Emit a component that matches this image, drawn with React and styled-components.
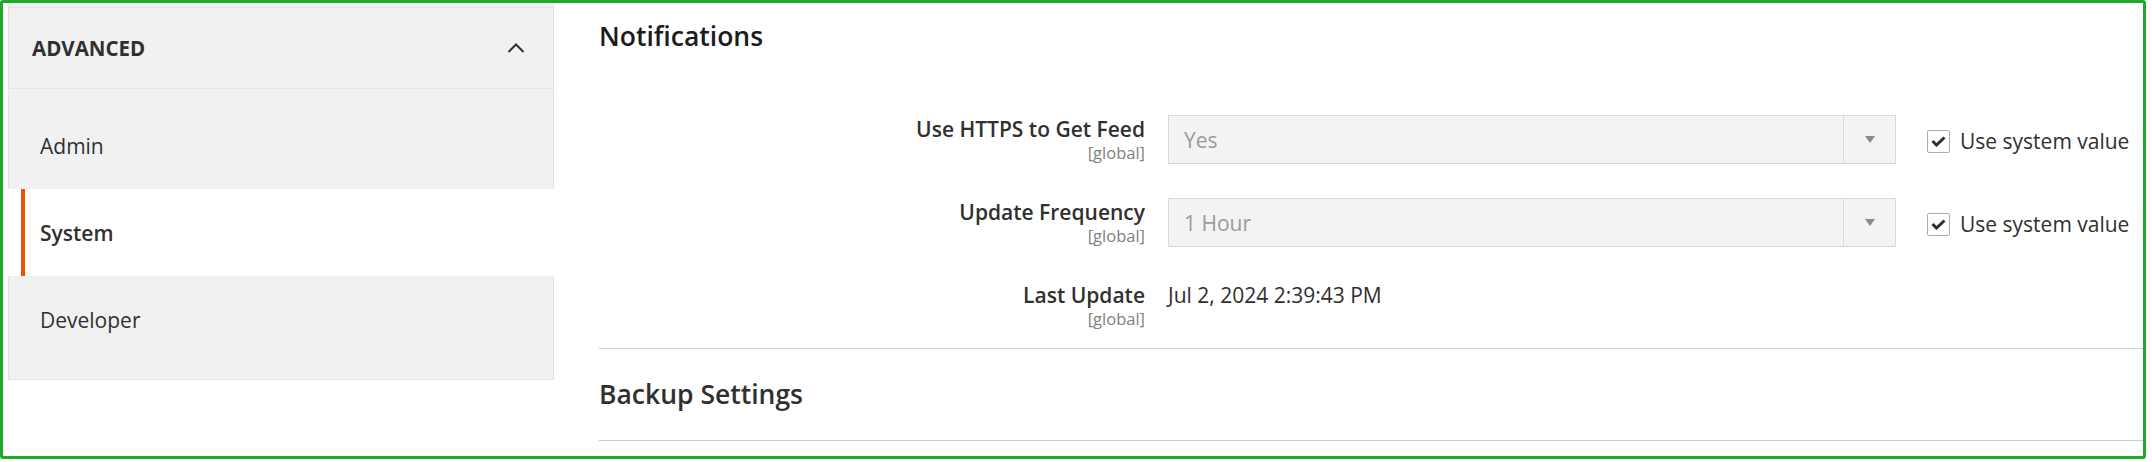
import React from 'react'
import styled, { createGlobalStyle } from 'styled-components'

const GlobalStyle = createGlobalStyle`
	html, body {
		margin: 0;
		padding: 0;
		background: #fff;
	}
	body {
		font-family: "Open Sans", "Noto Sans", sans-serif;
		color: #303030;
	}
	* {
		box-sizing: border-box;
	}
`

const navItems = [
	{ label: 'Admin' },
	{ label: 'System', active: true },
	{ label: 'Developer' },
]

const rows = [
	{ label: 'Use HTTPS to Get Feed', scope: '[global]', select: 'Yes' },
	{ label: 'Update Frequency', scope: '[global]', select: '1 Hour' },
	{ label: 'Last Update', scope: '[global]', value: 'Jul 2, 2024 2:39:43 PM' },
]

const ChevronUp = () => (
	<svg width="18" height="10" viewBox="0 0 18 10" fill="none">
		<polyline points="1.5,9 9,1.5 16.5,9" stroke="#303030" strokeWidth="2" />
	</svg>
)

const CheckMark = () => (
	<svg width="15" height="11" viewBox="0 0 15 11" fill="none">
		<polyline points="1.5,5 5.5,9 13.5,1.5" stroke="#303030" strokeWidth="3" />
	</svg>
)

const Select = ({ value }) => (
	<StyledSelect>
		<span className="select__value">{value}</span>
		<SelectArrow><Triangle /></SelectArrow>
	</StyledSelect>
)

const FormRow = ({ label, scope, select, value }) => (
	<Row>
		<Label>
			<span>{label}</span>
			<Scope>{scope}</Scope>
		</Label>
		{select ? (
			<>
				<Select value={select} />
				<UseDefault>
					<Checkbox><CheckMark /></Checkbox>
					<span>Use system value</span>
				</UseDefault>
			</>
		) : (
			<Value>{value}</Value>
		)}
	</Row>
)

export default function App() {
	return (
		<>
			<GlobalStyle />
			<Frame>
				<Sidebar>
					<PrevBlock />
					<NavTitle>
						<span>Advanced</span>
						<ChevronUp />
					</NavTitle>
					<NavList>
						{navItems.map(item => (
							<NavItem key={item.label} $active={item.active}>{item.label}</NavItem>
						))}
					</NavList>
				</Sidebar>
				<Content>
					<Section>
						<SectionTitle $first>Notifications</SectionTitle>
						<FormBody>
							{rows.map(row => <FormRow key={row.label} {...row} />)}
						</FormBody>
					</Section>
					<Section>
						<SectionTitle>Backup Settings</SectionTitle>
					</Section>
				</Content>
			</Frame>
		</>
	)
}

const Frame = styled.div`
	width: 2146px;
	height: 459px;
	border: 3px solid #21a829;
	border-radius: 3px;
	overflow: hidden;
	display: flex;
	align-items: flex-start;
	background: #fff;
`

const Sidebar = styled.nav`
	flex: 0 0 546px;
	margin-left: 5px;
	display: flex;
	flex-direction: column;
`

const PrevBlock = styled.div`
	height: 5px;
	background: #f1f1f1;
	border: 1px solid #e3e3e3;
	border-top: none;
`

const NavTitle = styled.div`
	height: 81px;
	display: flex;
	align-items: center;
	justify-content: space-between;
	padding: 0 28px 0 23px;
	background: #f1f1f1;
	border: 1px solid #e3e3e3;
	border-top: none;
	font-size: 20.5px;
	font-weight: 700;
	text-transform: uppercase;
	color: #303030;
`

const NavList = styled.ul`
	margin: 0;
	padding: 13px 0 16px;
	list-style: none;
	background: #f1f1f1;
	border: 1px solid #e3e3e3;
	border-top: none;
`

const NavItem = styled.li`
	height: 87px;
	display: flex;
	align-items: center;
	padding-left: ${p => p.$active ? '32px' : '31px'};
	margin: ${p => p.$active ? '0 -1px' : '0'};
	font-size: 21px;
	font-weight: ${p => p.$active ? 600 : 400};
	color: #303030;
	background: ${p => p.$active
		? 'linear-gradient(90deg, #fff 13px, #eb5202 13px, #eb5202 17px, #fff 17px)'
		: 'transparent'};
`

const Content = styled.main`
	flex: 1;
	min-width: 0;
	margin-left: 45px;
`

const Section = styled.section`
	border-bottom: 1px solid #cccccc;
`

const SectionTitle = styled.h2`
	margin: 0;
	padding: ${p => p.$first ? '16px 0 62px' : '28px 0 29px'};
	font-size: 26.5px;
	line-height: 34px;
	font-weight: 600;
	color: ${p => p.$first ? '#1c1c1c' : '#303030'};
`

const FormBody = styled.div`
	display: flex;
	flex-direction: column;
	gap: 34px;
	padding-bottom: 19px;
`

const Row = styled.div`
	display: flex;
	align-items: flex-start;
`

const Label = styled.label`
	flex: 0 0 546px;
	display: flex;
	flex-direction: column;
	align-items: flex-end;
	font-size: 21px;
	line-height: 28px;
	font-weight: 600;
	color: #303030;
`

const Scope = styled.span`
	font-size: 16.5px;
	line-height: 20px;
	font-weight: 400;
	color: #808080;
`

const StyledSelect = styled.div`
	width: 728px;
	height: 49px;
	margin-left: 23px;
	display: flex;
	align-items: center;
	background: #f3f3f3;
	border: 1px solid #d8d8d8;
	font-size: 21px;
	color: #9a9a9a;
	.select__value {
		flex: 1;
		padding-left: 15px;
	}
`

const SelectArrow = styled.span`
	width: 52px;
	height: 100%;
	display: flex;
	align-items: center;
	justify-content: center;
	border-left: 1px solid #d8d8d8;
`

const Triangle = styled.span`
	width: 0;
	height: 0;
	border-left: 5.5px solid transparent;
	border-right: 5.5px solid transparent;
	border-top: 7px solid #8a8a8a;
`

const UseDefault = styled.div`
	height: 49px;
	margin-left: 31px;
	padding-top: 3px;
	display: flex;
	align-items: center;
	gap: 10px;
	font-size: 21px;
	color: #303030;
	white-space: nowrap;
`

const Checkbox = styled.span`
	width: 23px;
	height: 23px;
	display: flex;
	align-items: center;
	justify-content: center;
	background: #fff;
	border: 1px solid #adadad;
	border-radius: 2px;
`

const Value = styled.div`
	margin-left: 23px;
	font-size: 21px;
	line-height: 28px;
	color: #303030;
`
